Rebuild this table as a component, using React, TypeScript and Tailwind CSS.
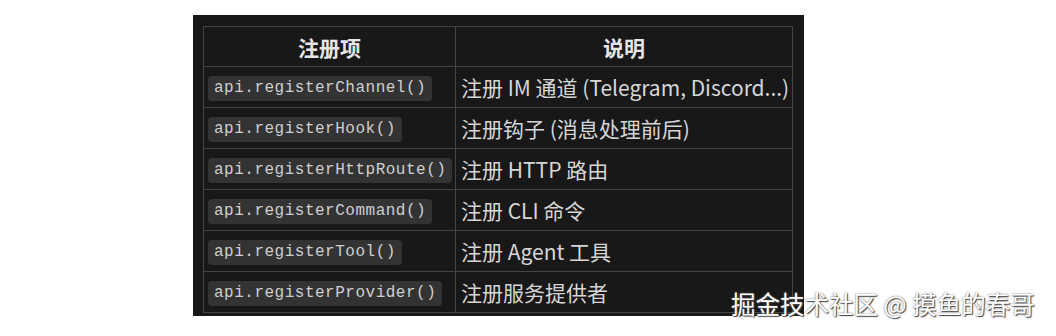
const rows: { api: string; desc: string }[] = [
  { api: "api.registerChannel()", desc: "注册 IM 通道 (Telegram, Discord...)" },
  { api: "api.registerHook()", desc: "注册钩子 (消息处理前后)" },
  { api: "api.registerHttpRoute()", desc: "注册 HTTP 路由" },
  { api: "api.registerCommand()", desc: "注册 CLI 命令" },
  { api: "api.registerTool()", desc: "注册 Agent 工具" },
  { api: "api.registerProvider()", desc: "注册服务提供者" },
];

const App = () => {
  return (
    <div className="relative w-[1056px] h-[336px] bg-white overflow-hidden pt-[15px] pl-[193px]">
      <div className="w-[611px] h-[301px] bg-[#181818] pl-[10px] pt-[11px]">
        <table className="table-fixed border-collapse w-[589px] text-[#d6d6d6] font-['Noto_Sans_CJK_SC',sans-serif]">
          <colgroup>
            <col className="w-[252px]" />
            <col className="w-[337px]" />
          </colgroup>
          <thead>
            <tr className="h-[40px]">
              <th className="border border-[#444] text-center text-[21px] leading-[28px] font-bold text-[#e6e6e6]">
                注册项
              </th>
              <th className="border border-[#444] text-center text-[21px] leading-[28px] font-bold text-[#e6e6e6]">
                说明
              </th>
            </tr>
          </thead>
          <tbody>
            {rows.map((r) => (
              <tr key={r.api} className="h-[41px]">
                <td className="border border-[#444] pl-[4px]">
                  <code className="inline-block h-[25px] leading-[25px] rounded-[4px] bg-[#333] px-[6px] text-[16px] tracking-[0.5px] text-[#cfcfcf] font-['Liberation_Mono',monospace]">
                    {r.api}
                  </code>
                </td>
                <td className="border border-[#444] pl-[5px] text-[21px] leading-[28px] whitespace-nowrap">
                  {r.desc}
                </td>
              </tr>
            ))}
          </tbody>
        </table>
      </div>
      <div className="absolute left-[731px] top-[291px] text-[24.5px] leading-[26px] text-white font-['Noto_Sans_CJK_SC',sans-serif] [text-shadow:1px_1px_1px_#444,0_0_2px_#666]">
        掘金技术社区 @ 摸鱼的春哥
      </div>
    </div>
  );
};

export default App;
